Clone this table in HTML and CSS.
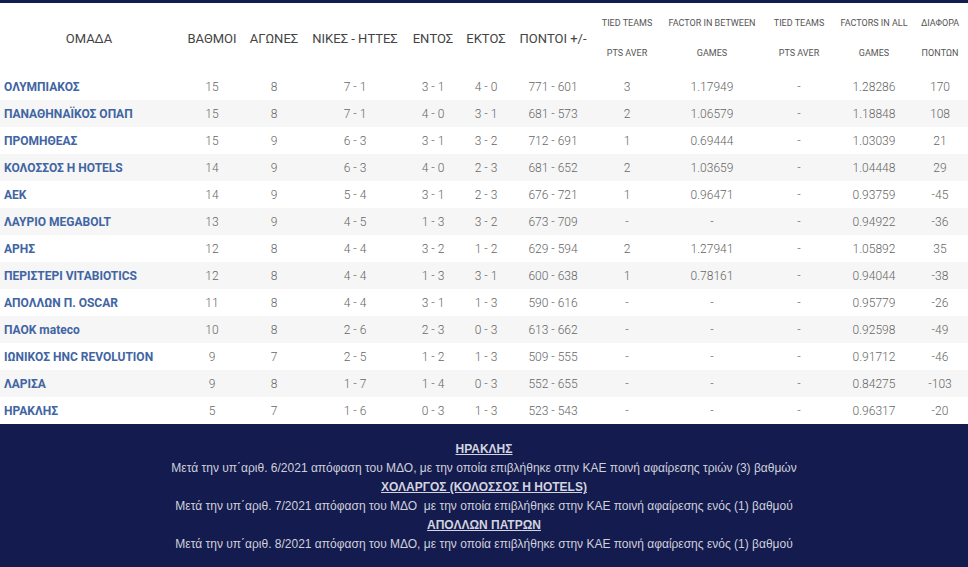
FILE: index.html
```html
<!DOCTYPE html>
<html lang="el">
<head>
<meta charset="utf-8">
<title>Βαθμολογία</title>
<link rel="stylesheet" href="styles.css">
</head>
<body>
<div class="topbar"></div>
<table class="standings">
  <colgroup>
    <col class="c-team"><col class="c-pts"><col class="c-gp"><col class="c-wl"><col class="c-home"><col class="c-away"><col class="c-score"><col class="c-tt1"><col class="c-fb"><col class="c-tt2"><col class="c-fa"><col class="c-diff">
  </colgroup>
  <thead>
    <tr>
      <th>ΟΜΑΔΑ</th>
      <th>ΒΑΘΜΟΙ</th>
      <th>ΑΓΩΝΕΣ</th>
      <th>ΝΙΚΕΣ - ΗΤΤΕΣ</th>
      <th>ΕΝΤΟΣ</th>
      <th>ΕΚΤΟΣ</th>
      <th>ΠΟΝΤΟΙ +/-</th>
      <th class="small">TIED TEAMS<br>PTS AVER</th>
      <th class="small">FACTOR IN BETWEEN<br>GAMES</th>
      <th class="small">TIED TEAMS<br>PTS AVER</th>
      <th class="small">FACTORS IN ALL<br>GAMES</th>
      <th class="small">ΔΙΑΦΟΡΑ<br>ΠΟΝΤΩΝ</th>
    </tr>
  </thead>
  <tbody>
    <tr><td class="team">ΟΛΥΜΠΙΑΚΟΣ</td><td>15</td><td>8</td><td>7 - 1</td><td>3 - 1</td><td>4 - 0</td><td>771 - 601</td><td>3</td><td>1.17949</td><td>-</td><td>1.28286</td><td>170</td></tr>
    <tr><td class="team">ΠΑΝΑΘΗΝΑΪΚΟΣ ΟΠΑΠ</td><td>15</td><td>8</td><td>7 - 1</td><td>4 - 0</td><td>3 - 1</td><td>681 - 573</td><td>2</td><td>1.06579</td><td>-</td><td>1.18848</td><td>108</td></tr>
    <tr><td class="team">ΠΡΟΜΗΘΕΑΣ</td><td>15</td><td>9</td><td>6 - 3</td><td>3 - 1</td><td>3 - 2</td><td>712 - 691</td><td>1</td><td>0.69444</td><td>-</td><td>1.03039</td><td>21</td></tr>
    <tr><td class="team">ΚΟΛΟΣΣΟΣ H HOTELS</td><td>14</td><td>9</td><td>6 - 3</td><td>4 - 0</td><td>2 - 3</td><td>681 - 652</td><td>2</td><td>1.03659</td><td>-</td><td>1.04448</td><td>29</td></tr>
    <tr><td class="team">ΑΕΚ</td><td>14</td><td>9</td><td>5 - 4</td><td>3 - 1</td><td>2 - 3</td><td>676 - 721</td><td>1</td><td>0.96471</td><td>-</td><td>0.93759</td><td>-45</td></tr>
    <tr><td class="team">ΛΑΥΡΙΟ MEGABOLT</td><td>13</td><td>9</td><td>4 - 5</td><td>1 - 3</td><td>3 - 2</td><td>673 - 709</td><td>-</td><td>-</td><td>-</td><td>0.94922</td><td>-36</td></tr>
    <tr><td class="team">ΑΡΗΣ</td><td>12</td><td>8</td><td>4 - 4</td><td>3 - 2</td><td>1 - 2</td><td>629 - 594</td><td>2</td><td>1.27941</td><td>-</td><td>1.05892</td><td>35</td></tr>
    <tr><td class="team">ΠΕΡΙΣΤΕΡΙ VITABIOTICS</td><td>12</td><td>8</td><td>4 - 4</td><td>1 - 3</td><td>3 - 1</td><td>600 - 638</td><td>1</td><td>0.78161</td><td>-</td><td>0.94044</td><td>-38</td></tr>
    <tr><td class="team">ΑΠΟΛΛΩΝ Π. OSCAR</td><td>11</td><td>8</td><td>4 - 4</td><td>3 - 1</td><td>1 - 3</td><td>590 - 616</td><td>-</td><td>-</td><td>-</td><td>0.95779</td><td>-26</td></tr>
    <tr><td class="team">ΠΑΟΚ mateco</td><td>10</td><td>8</td><td>2 - 6</td><td>2 - 3</td><td>0 - 3</td><td>613 - 662</td><td>-</td><td>-</td><td>-</td><td>0.92598</td><td>-49</td></tr>
    <tr><td class="team">ΙΩΝΙΚΟΣ HNC REVOLUTION</td><td>9</td><td>7</td><td>2 - 5</td><td>1 - 2</td><td>1 - 3</td><td>509 - 555</td><td>-</td><td>-</td><td>-</td><td>0.91712</td><td>-46</td></tr>
    <tr><td class="team">ΛΑΡΙΣΑ</td><td>9</td><td>8</td><td>1 - 7</td><td>1 - 4</td><td>0 - 3</td><td>552 - 655</td><td>-</td><td>-</td><td>-</td><td>0.84275</td><td>-103</td></tr>
    <tr><td class="team">ΗΡΑΚΛΗΣ</td><td>5</td><td>7</td><td>1 - 6</td><td>0 - 3</td><td>1 - 3</td><td>523 - 543</td><td>-</td><td>-</td><td>-</td><td>0.96317</td><td>-20</td></tr>
  </tbody>
</table>
<div class="notes">
  <p class="note-title">ΗΡΑΚΛΗΣ</p>
  <p>Μετά την υπ΄αριθ. 6/2021 απόφαση του ΜΔΟ, με την οποία επιβλήθηκε στην ΚΑΕ ποινή αφαίρεσης τριών (3) βαθμών</p>
  <p class="note-title">ΧΟΛΑΡΓΟΣ (ΚΟΛΟΣΣΟΣ H HOTELS)</p>
  <p>Μετά την υπ΄αριθ. 7/2021 απόφαση του ΜΔΟ&nbsp; με την οποία επιβλήθηκε στην ΚΑΕ ποινή αφαίρεσης ενός (1) βαθμού</p>
  <p class="note-title">ΑΠΟΛΛΩΝ ΠΑΤΡΩΝ</p>
  <p>Μετά την υπ΄αριθ. 8/2021 απόφαση του ΜΔΟ, με την οποία επιβλήθηκε στην ΚΑΕ ποινή αφαίρεσης ενός (1) βαθμού</p>
</div>
</body>
</html>
```

FILE: styles.css
```css
html, body {
  margin: 0;
  padding: 0;
  background: #141b4f;
}
body {
  font-family: Roboto, "Noto Sans", sans-serif;
}
.topbar {
  height: 3px;
  background: #151c4f;
}
.standings {
  width: 968px;
  border-collapse: collapse;
  table-layout: fixed;
  background: #ffffff;
}
.c-team { width: 178px; }
.c-pts { width: 68px; }
.c-gp { width: 56px; }
.c-wl { width: 106px; }
.c-home { width: 50px; }
.c-away { width: 56px; }
.c-score { width: 78px; }
.c-tt1 { width: 70px; }
.c-fb { width: 100px; }
.c-tt2 { width: 74px; }
.c-fa { width: 76px; }
.c-diff { width: 56px; }

.standings th {
  height: 70px;
  padding: 0;
  font-weight: 400;
  font-size: 13px;
  color: #444;
  text-align: center;
  vertical-align: middle;
  white-space: nowrap;
}
.standings th.small {
  font-size: 9px;
  line-height: 30px;
  color: #555;
}
.standings td {
  height: 27px;
  padding: 0;
  font-size: 12px;
  font-weight: 300;
  color: #666;
  text-align: center;
  vertical-align: middle;
  white-space: nowrap;
}
.standings td.team {
  text-align: left;
  padding-left: 4px;
  font-weight: 700;
  color: #4165a3;
}
.standings tbody tr:nth-child(even) td {
  background: #f6f6f6;
}
.notes {
  background: #141b4f;
  padding: 16px 0 16px;
  text-align: center;
  font-family: "Liberation Sans", Arial, sans-serif;
  font-size: 12px;
  line-height: 19px;
  color: #cfd0da;
}
.notes p {
  margin: 0;
}
.notes .note-title {
  font-weight: 700;
  text-decoration: underline;
  color: #d3d4de;
}
```
